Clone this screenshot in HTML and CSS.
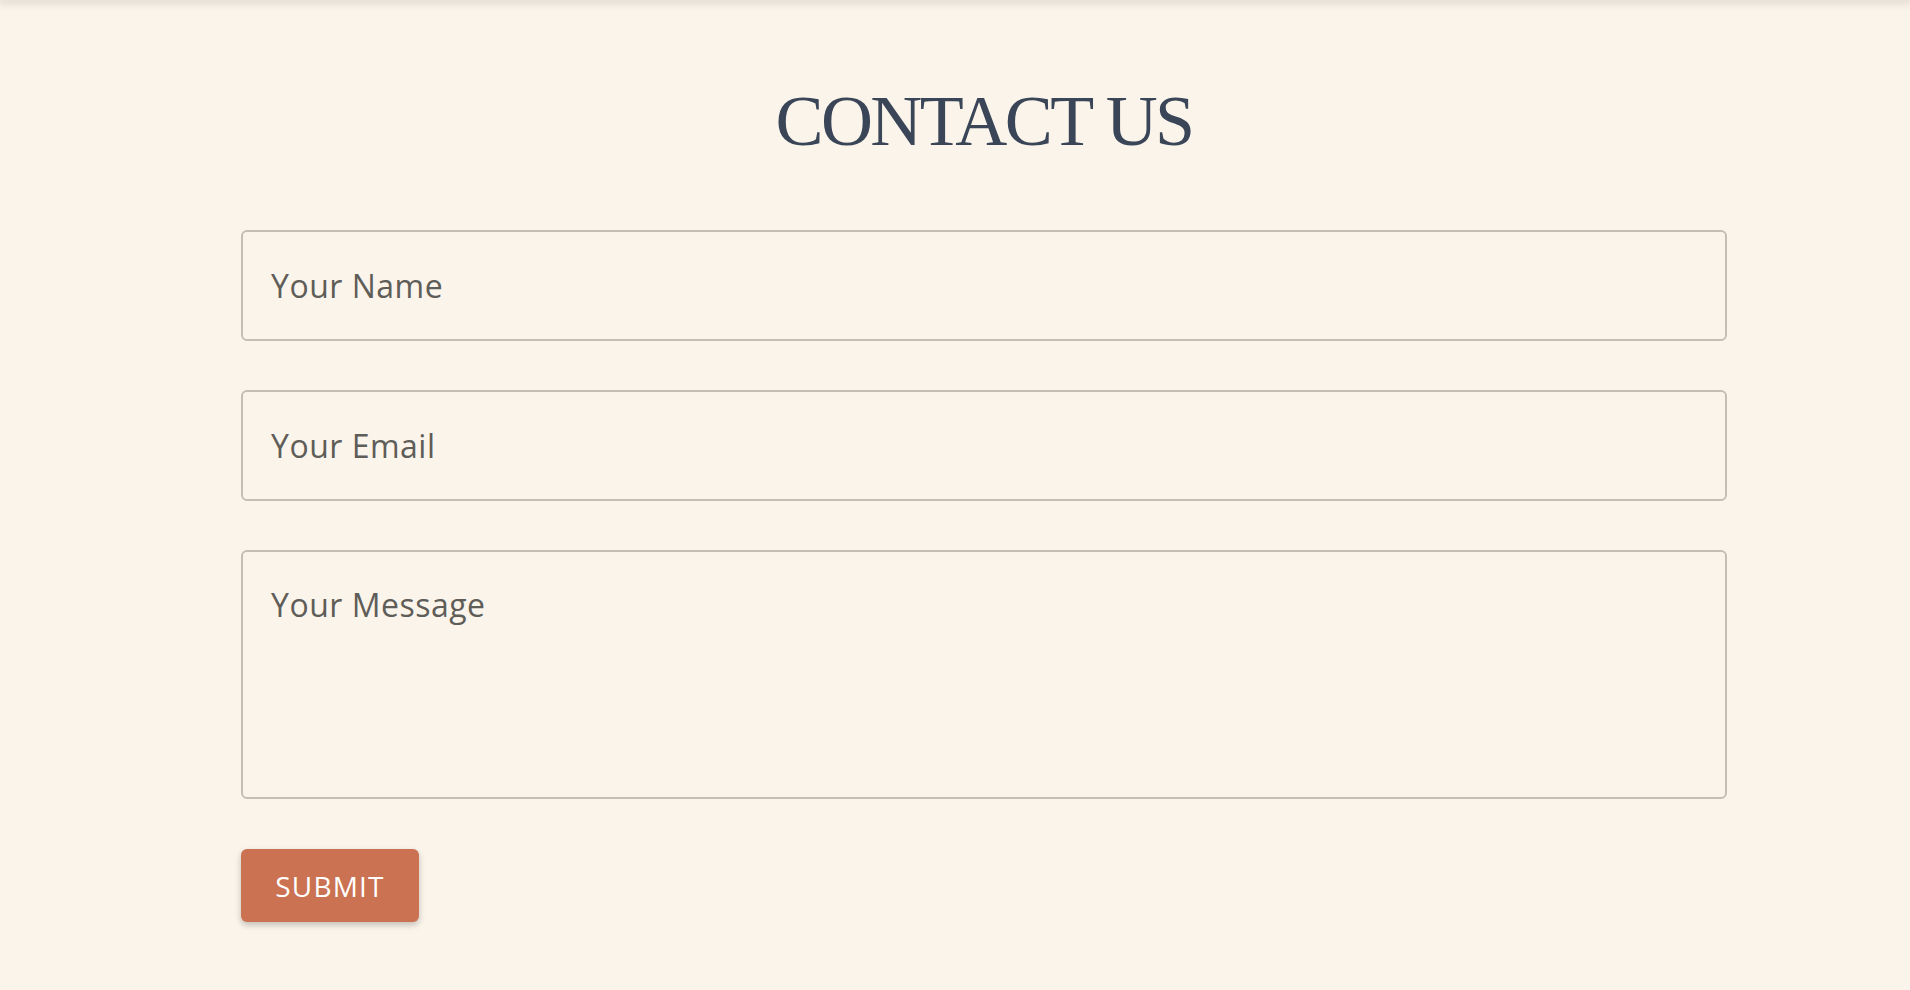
FILE: index.html
```html
<!DOCTYPE html>
<html lang="en">
<head>
<meta charset="utf-8">
<title>Contact Us</title>
<link rel="stylesheet" href="styles.css">
</head>
<body>
<div class="topbar"></div>
<section class="contact">
  <h1 class="title">CONTACT US</h1>
  <form class="form">
    <input class="field" type="text" placeholder="Your Name">
    <input class="field" type="email" placeholder="Your Email">
    <textarea class="field area" placeholder="Your Message"></textarea>
    <button class="submit" type="button">SUBMIT</button>
  </form>
</section>
</body>
</html>
```

FILE: styles.css
```css
html, body {
  margin: 0;
  padding: 0;
  background: #faf4eb;
  height: 100%;
}
body {
  font-family: "Open Sans", "Liberation Sans", sans-serif;
  overflow: hidden;
}
.topbar {
  height: 0;
  box-shadow: 0 0 9px 2px rgba(90, 70, 50, 0.28);
}
.contact {
  width: 1486px;
  margin-left: 241px;
  padding-top: 85px;
}
.title {
  margin: 0;
  font-family: "Liberation Serif", "DejaVu Serif", serif;
  font-weight: 400;
  font-size: 72px;
  line-height: 1;
  letter-spacing: -2.6px;
  color: #3a4657;
  text-align: center;
}
.form {
  display: flex;
  flex-direction: column;
  align-items: flex-start;
  gap: 49px;
  margin-top: 73px;
}
.field {
  box-sizing: border-box;
  width: 100%;
  height: 111px;
  margin: 0;
  border: 2px solid #c4bfb4;
  border-radius: 6px;
  background: transparent;
  padding: 0 28px;
  font-family: "Open Sans", "Liberation Sans", sans-serif;
  font-size: 32px;
  letter-spacing: 0.5px;
  color: #5f5d58;
  outline: none;
}
.field::placeholder {
  color: #5f5d58;
  opacity: 1;
}
.area {
  height: 249px;
  padding: 31px 28px;
  line-height: normal;
  resize: none;
}
.submit {
  width: 178px;
  height: 73px;
  margin-top: 1px;
  border: none;
  border-radius: 6px;
  background: #cb7252;
  color: #fff;
  font-family: "Open Sans", "Liberation Sans", sans-serif;
  font-size: 28px;
  letter-spacing: 1.2px;
  box-shadow: 0 3px 6px rgba(0, 0, 0, 0.22);
  padding: 0;
}
```
